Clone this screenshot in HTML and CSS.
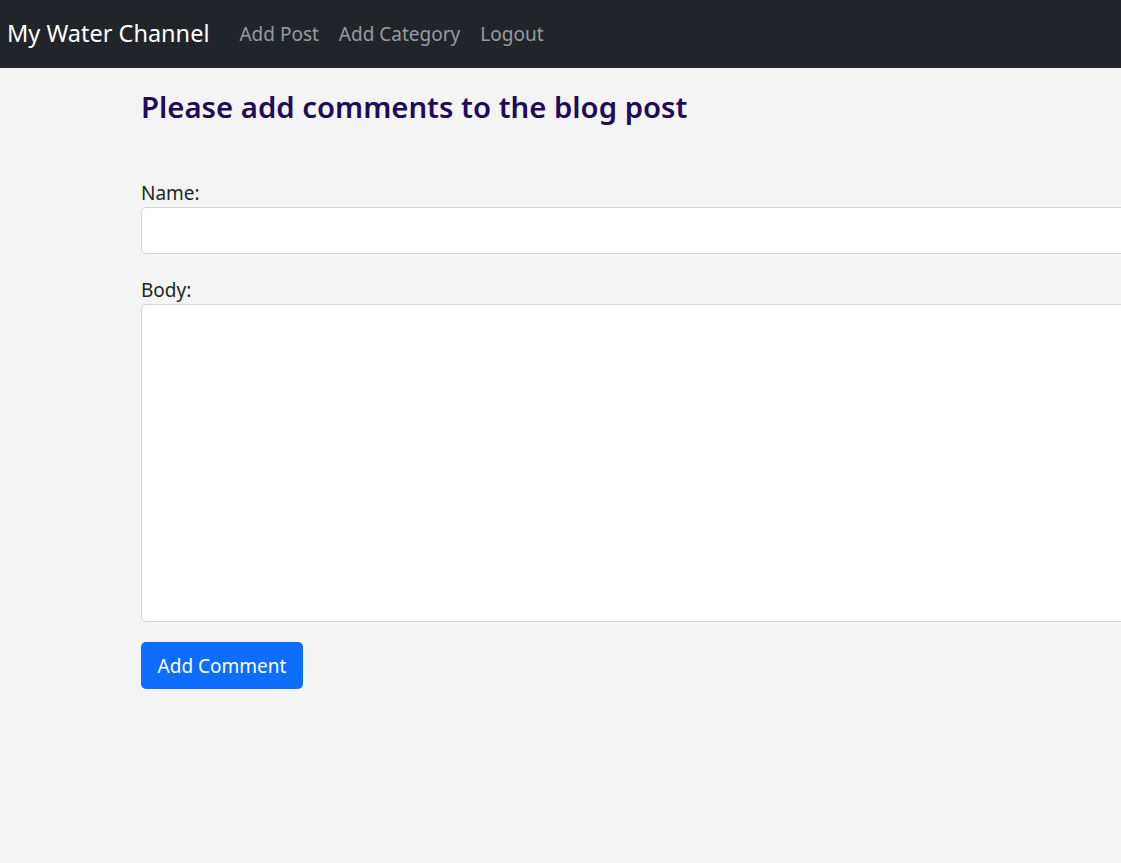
FILE: index.html
```html
<!DOCTYPE html>
<html lang="en">
<head>
<meta charset="utf-8">
<title>My Water Channel</title>
<link rel="stylesheet" href="styles.css">
</head>
<body>
<nav class="navbar">
  <a class="brand" href="#">My Water Channel</a>
  <ul class="nav-links">
    <li><a href="#">Add Post</a></li>
    <li><a href="#">Add Category</a></li>
    <li><a href="#">Logout</a></li>
  </ul>
</nav>
<main class="container">
  <h2 class="title">Please add comments to the blog post</h2>
  <form class="comment-form">
    <div class="field">
      <label for="name">Name:</label>
      <input id="name" type="text" class="control">
    </div>
    <div class="field">
      <label for="body">Body:</label>
      <textarea id="body" class="control area"></textarea>
    </div>
    <div class="actions">
      <button type="button" class="btn">Add Comment</button>
    </div>
  </form>
</main>
</body>
</html>
```
FILE: styles.css
```css
html, body {
  margin: 0;
  padding: 0;
  overflow: hidden;
}
body {
  background: #f4f4f4;
  font-family: "Noto Sans", "Open Sans", sans-serif;
  color: #212529;
  min-height: 863px;
}
.navbar {
  display: flex;
  align-items: center;
  height: 68px;
  background: #212529;
  padding: 0 0 0 7px;
  box-sizing: border-box;
}
.brand {
  color: #fff;
  text-decoration: none;
  font-size: 23.5px;
  margin-right: 20px;
  padding-bottom: 2px;
}
.nav-links {
  display: flex;
  list-style: none;
  margin: 0;
  padding: 0;
  gap: 0;
}
.nav-links a {
  display: block;
  color: #9a9b9e;
  text-decoration: none;
  font-size: 19px;
  padding: 0 10px;
}
.container {
  padding: 20px 0 0 141px;
  width: 1100px;
}
.title {
  margin: 0;
  font-size: 29.3px;
  font-weight: 600;
  color: #1e0b5a;
  line-height: 38px;
}
.comment-form {
  margin-top: 53px;
  display: flex;
  flex-direction: column;
  gap: 22px;
}
.field {
  display: flex;
  flex-direction: column;
}
.field label {
  font-size: 19px;
  line-height: 28px;
}
.control {
  box-sizing: border-box;
  width: 1000px;
  height: 47px;
  border: 1px solid #d4d4d4;
  border-radius: 5px;
  background: #fff;
  font: inherit;
  padding: 6px 14px;
  margin: 0;
  resize: none;
}
.area {
  height: 318px;
}
.actions {
  margin-top: -2px;
}
.btn {
  background: #0d6efd;
  color: #fff;
  border: 0;
  border-radius: 5px;
  height: 47px;
  width: 162px;
  font-family: inherit;
  font-size: 19px;
  padding: 0;
}
```
